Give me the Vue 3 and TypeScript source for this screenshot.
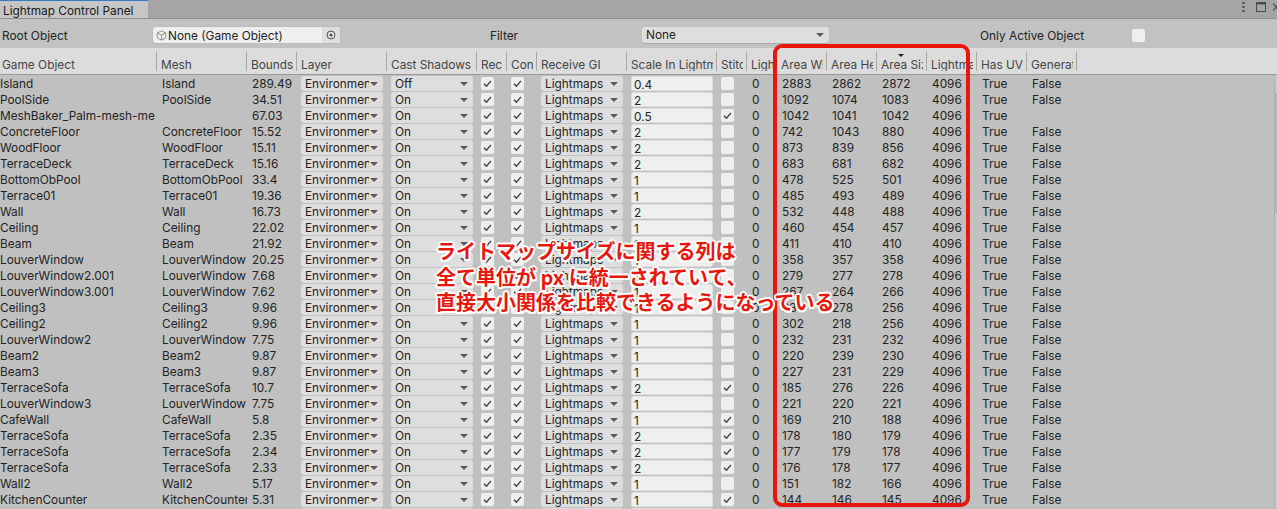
<script setup lang="ts">
interface Row {
  name: string
  mesh: string
  bounds: string
  shadows: string
  scale: string
  stitch: boolean
  w: string
  h: string
  s: string
  generated: string
}

const raw: [string, string, string, string, number, string, string, string][] = [
  ['Island', 'Island', '289.49', '0.4', 0, '2883', '2862', '2872'],
  ['PoolSide', 'PoolSide', '34.51', '2', 0, '1092', '1074', '1083'],
  ['MeshBaker_Palm-mesh-me', '', '67.03', '0.5', 1, '1042', '1041', '1042'],
  ['ConcreteFloor', 'ConcreteFloor', '15.52', '2', 0, '742', '1043', '880'],
  ['WoodFloor', 'WoodFloor', '15.11', '2', 0, '873', '839', '856'],
  ['TerraceDeck', 'TerraceDeck', '15.16', '2', 0, '683', '681', '682'],
  ['BottomObPool', 'BottomObPool', '33.4', '1', 0, '478', '525', '501'],
  ['Terrace01', 'Terrace01', '19.36', '1', 0, '485', '493', '489'],
  ['Wall', 'Wall', '16.73', '2', 0, '532', '448', '488'],
  ['Ceiling', 'Ceiling', '22.02', '1', 0, '460', '454', '457'],
  ['Beam', 'Beam', '21.92', '1', 0, '411', '410', '410'],
  ['LouverWindow', 'LouverWindow', '20.25', '1', 0, '358', '357', '358'],
  ['LouverWindow2.001', 'LouverWindow', '7.68', '1', 0, '279', '277', '278'],
  ['LouverWindow3.001', 'LouverWindow', '7.62', '1', 0, '267', '264', '266'],
  ['Ceiling3', 'Ceiling3', '9.96', '1', 0, '236', '278', '256'],
  ['Ceiling2', 'Ceiling2', '9.96', '1', 0, '302', '218', '256'],
  ['LouverWindow2', 'LouverWindow', '7.75', '1', 0, '232', '231', '232'],
  ['Beam2', 'Beam2', '9.87', '1', 0, '220', '239', '230'],
  ['Beam3', 'Beam3', '9.87', '1', 0, '227', '231', '229'],
  ['TerraceSofa', 'TerraceSofa', '10.7', '2', 1, '185', '276', '226'],
  ['LouverWindow3', 'LouverWindow', '7.75', '1', 0, '221', '220', '221'],
  ['CafeWall', 'CafeWall', '5.8', '1', 1, '169', '210', '188'],
  ['TerraceSofa', 'TerraceSofa', '2.35', '2', 1, '178', '180', '179'],
  ['TerraceSofa', 'TerraceSofa', '2.34', '2', 1, '177', '179', '178'],
  ['TerraceSofa', 'TerraceSofa', '2.33', '2', 1, '176', '178', '177'],
  ['Wall2', 'Wall2', '5.17', '1', 0, '151', '182', '166'],
  ['KitchenCounter', 'KitchenCounter', '5.31', '1', 1, '144', '146', '145'],
]

const rows: Row[] = raw.map((r, i) => ({
  name: r[0],
  mesh: r[1],
  bounds: r[2],
  shadows: i === 0 ? 'Off' : 'On',
  scale: r[3],
  stitch: r[4] === 1,
  w: r[5],
  h: r[6],
  s: r[7],
  generated: i === 2 ? '' : 'False',
}))

const headers: string[] = [
  'Game Object', 'Mesh', 'Bounds', 'Layer', 'Cast Shadows', 'Rec', 'Con', 'Receive GI',
  'Scale In Lightmap', 'Stitch', 'Lightmap', 'Area Width', 'Area Height', 'Area Size',
  'Lightmap', 'Has UV', 'Generated',
]
</script>

<template>
  <div class="panel">
    <div class="tabbar">
      <div class="tab">Lightmap Control Panel</div>
      <div class="winicons">
        <svg class="dots" width="3" height="10" viewBox="0 0 3 10"><rect x="0.3" y="0" width="2.4" height="2" fill="#555" /><rect x="0.3" y="4" width="2.4" height="2" fill="#555" /><rect x="0.3" y="8" width="2.4" height="2" fill="#555" /></svg>
        <svg class="maxi" width="10" height="10" viewBox="0 0 10 10"><rect x="0.5" y="0.5" width="9" height="9" fill="none" stroke="#4a4a4a" /><rect x="0" y="0" width="10" height="2.4" fill="#4a4a4a" /></svg>
        <svg class="close" width="4" height="8" viewBox="0 0 4 8"><path d="M0.3 0.3 L5.5 7.7 M5.5 0.3 L0.3 7.7" stroke="#555" stroke-width="1.2" fill="none" /></svg>
      </div>
    </div>

    <div class="controls">
      <div class="clabel root">Root Object</div>
      <div class="objfield">
        <svg class="cube" width="11" height="11" viewBox="0 0 12 12"><path d="M6 1 L10.6 3.2 V8.6 L6 11 L1.4 8.6 V3.2 Z M1.4 3.2 L6 5.6 L10.6 3.2 M6 5.6 V11" fill="none" stroke="#8a8a8a" stroke-width="1" /></svg>
        <span class="objtext">None (Game Object)</span>
        <span class="picker"><svg width="10" height="10" viewBox="0 0 10 10"><circle cx="5" cy="5" r="4" fill="none" stroke="#555" /><circle cx="5" cy="5" r="1.6" fill="#555" /></svg></span>
      </div>
      <div class="clabel filter">Filter</div>
      <div class="bigdrop">None<i class="arrow"></i></div>
      <div class="clabel active">Only Active Object</div>
      <div class="box"></div>
    </div>

    <div class="grid head">
      <div v-for="(h, i) in headers" :key="i" class="hcell">
        <span class="htext">{{ h }}</span>
        <i v-if="i === 13" class="sort"></i>
      </div>
    </div>

    <div v-for="(r, i) in rows" :key="i" class="grid row">
      <div class="cell first">{{ r.name }}</div>
      <div class="cell mesh">{{ r.mesh }}</div>
      <div class="cell">{{ r.bounds }}</div>
      <div class="wrap"><div class="drop"><span class="droptext">Environment</span><i class="arrow"></i></div></div>
      <div class="wrap"><div class="drop"><span class="droptext">{{ r.shadows }}</span><i class="arrow"></i></div></div>
      <div class="wrap"><div class="box"><svg width="13" height="13" viewBox="0 0 13 13"><path d="M3 6.8 L5.4 9.2 L10 3.8" fill="none" stroke="#3a3a3a" stroke-width="1.3" /></svg></div></div>
      <div class="wrap"><div class="box"><svg width="13" height="13" viewBox="0 0 13 13"><path d="M3 6.8 L5.4 9.2 L10 3.8" fill="none" stroke="#3a3a3a" stroke-width="1.3" /></svg></div></div>
      <div class="wrap"><div class="drop"><span class="droptext">Lightmaps</span><i class="arrow"></i></div></div>
      <div class="wrap"><div class="input">{{ r.scale }}</div></div>
      <div class="wrap"><div class="box"><svg v-if="r.stitch" width="13" height="13" viewBox="0 0 13 13"><path d="M3 6.8 L5.4 9.2 L10 3.8" fill="none" stroke="#3a3a3a" stroke-width="1.3" /></svg></div></div>
      <div class="cell">0</div>
      <div class="cell">{{ r.w }}</div>
      <div class="cell">{{ r.h }}</div>
      <div class="cell">{{ r.s }}</div>
      <div class="cell">4096</div>
      <div class="cell">True</div>
      <div class="cell">{{ r.generated }}</div>
    </div>

    <div class="grid row">
      <div></div><div></div><div></div>
      <div class="wrap"><div class="drop"></div></div>
      <div class="wrap"><div class="drop"></div></div>
      <div class="wrap"><div class="box"></div></div>
      <div class="wrap"><div class="box"></div></div>
      <div class="wrap"><div class="drop"></div></div>
      <div class="wrap"><div class="input"></div></div>
      <div class="wrap"><div class="box"></div></div>
    </div>

    <div class="scrollbar"><div class="thumb"></div></div>
    <div class="redbox"></div>
    <div class="note">
      <div>ライトマップサイズに関する列は</div>
      <div>全て単位が px に統一されていて、</div>
      <div>直接大小関係を比較できるようになっている</div>
    </div>
  </div>
</template>

<style>
html, body { margin: 0; background: #c0c0c0; overflow: hidden; }
</style>

<style scoped>
.panel {
  position: relative;
  width: 1277px;
  height: 509px;
  overflow: hidden;
  background: #c0c0c0;
  font-family: Inter, "Liberation Sans", sans-serif;
  font-size: 11.85px;
  color: #232323;
}
.tabbar {
  height: 18px;
  background: #a5a5a5;
  border-bottom: 1px solid #8f8f8f;
  display: flex;
  justify-content: space-between;
}
.tab {
  width: 148px;
  border-top: 1px solid #3a78c4;
  background: #c6c6c6;
  padding-left: 3px;
  box-sizing: border-box;
  height: 18px;
  line-height: 20px;
  color: #1a1a1a;
  white-space: nowrap;
}
.winicons {
  display: flex;
  align-items: flex-start;
  padding-top: 2px;
}
.dots { margin-right: 11px; }
.maxi { margin-right: 7px; }
.close { margin-top: 1px; }
.controls {
  height: 29px;
  padding-top: 3px;
  box-sizing: border-box;
  background: #c2c2c2;
  display: flex;
  align-items: center;
}
.clabel { white-space: nowrap; padding-top: 2px; }
.root { width: 151px; margin-left: 2px; }
.filter { width: 152px; margin-left: 150px; }
.active { width: 152px; margin-left: 151px; }
.objfield {
  width: 187px;
  height: 16px;
  background: #efefef;
  border-radius: 3px;
  display: flex;
  align-items: center;
  box-shadow: 0 0 0 0.5px #b4b4b4;
  overflow: hidden;
}
.cube { margin-left: 3px; flex: none; }
.objtext { margin-left: 1px; flex: 1; white-space: nowrap; padding-top: 2px; }
.picker {
  width: 18px;
  height: 16px;
  background: #dedede;
  display: flex;
  align-items: center;
  justify-content: center;
}
.bigdrop {
  position: relative;
  width: 187px;
  height: 16px;
  line-height: 16px;
  padding-left: 4px;
  box-sizing: border-box;
  background: #dfdfdf;
  border-radius: 3px;
  box-shadow: 0 1px 0 #aaa;
}
.arrow {
  position: absolute;
  right: 5px;
  top: 6px;
  width: 0;
  height: 0;
  border-left: 4px solid transparent;
  border-right: 4px solid transparent;
  border-top: 4.5px solid #5a5a5a;
}
.grid {
  display: grid;
  grid-template-columns: 157px 90px 50px 90px 90px 30px 30px 90px 90px 30px 30px 50px 50px 50px 50px 50px 50px 1fr;
}
.head {
  height: 26px;
  background: #dcdcdc;
  border-bottom: 1px solid #9a9a9a;
}
.hcell {
  position: relative;
  box-sizing: border-box;
  margin-top: 4px;
  padding: 6px 3px 0 4px;
  border-right: 1px solid #a8a8a8;
  height: 19px;
  overflow: hidden;
  color: #454545;
  white-space: nowrap;
}
.hcell:first-child { padding-left: 2px; }
.htext { display: block; overflow: hidden; line-height: 15px; height: 13px; }
.sort {
  position: absolute;
  left: 21px;
  top: 2px;
  width: 0;
  height: 0;
  border-left: 3px solid transparent;
  border-right: 3px solid transparent;
  border-top: 3.5px solid #222;
}
.row { height: 16px; }
.cell {
  padding: 1px 4px 0 5px;
  line-height: 17px;
  white-space: nowrap;
  overflow: hidden;
}
.first { padding-left: 0; padding-right: 2px; }
.mesh { padding-right: 5px; }
.wrap { padding: 1px 4px 0; min-width: 0; }
.drop {
  position: relative;
  height: 15px;
  line-height: 17px;
  background: #dedede;
  border-radius: 3px;
  padding-left: 4px;
  overflow: hidden;
}
.droptext {
  display: block;
  width: 64px;
  height: 15px;
  overflow: hidden;
  white-space: nowrap;
}
.input {
  height: 15px;
  line-height: 18px;
  background: #efefef;
  border-radius: 3px;
  padding-left: 3px;
  box-shadow: inset 0 0 0 0.5px #d0d0d0;
  overflow: hidden;
}
.wrap > .box { margin-top: 1px; }
.box {
  width: 13px;
  height: 13px;
  background: #efefef;
  border-radius: 2px;
  display: block;
}
.box svg { display: block; }
.scrollbar {
  position: absolute;
  left: 1274px;
  top: 75px;
  bottom: 0;
  width: 3px;
  background: #c8c8c8;
  border-left: 1px solid #b0b0b0;
}
.thumb {
  margin-top: 18px;
  height: 120px;
  background: #b4b4b4;
}
.redbox {
  position: absolute;
  left: 773px;
  top: 44px;
  width: 197px;
  height: 463px;
  box-sizing: border-box;
  border: 4px solid #e8160c;
  border-radius: 9px;
}
.note {
  position: absolute;
  left: 436px;
  top: 238px;
  font-family: "Noto Sans CJK JP", sans-serif;
  font-size: 20px;
  font-weight: 700;
  line-height: 25.5px;
  color: #e8160c;
  white-space: nowrap;
  text-shadow: -2px 0 0 #fff, 2px 0 0 #fff, 0 -2px 0 #fff, 0 2px 0 #fff, -1.5px -1.5px 0 #fff, 1.5px 1.5px 0 #fff, -1.5px 1.5px 0 #fff, 1.5px -1.5px 0 #fff;
}
</style>
